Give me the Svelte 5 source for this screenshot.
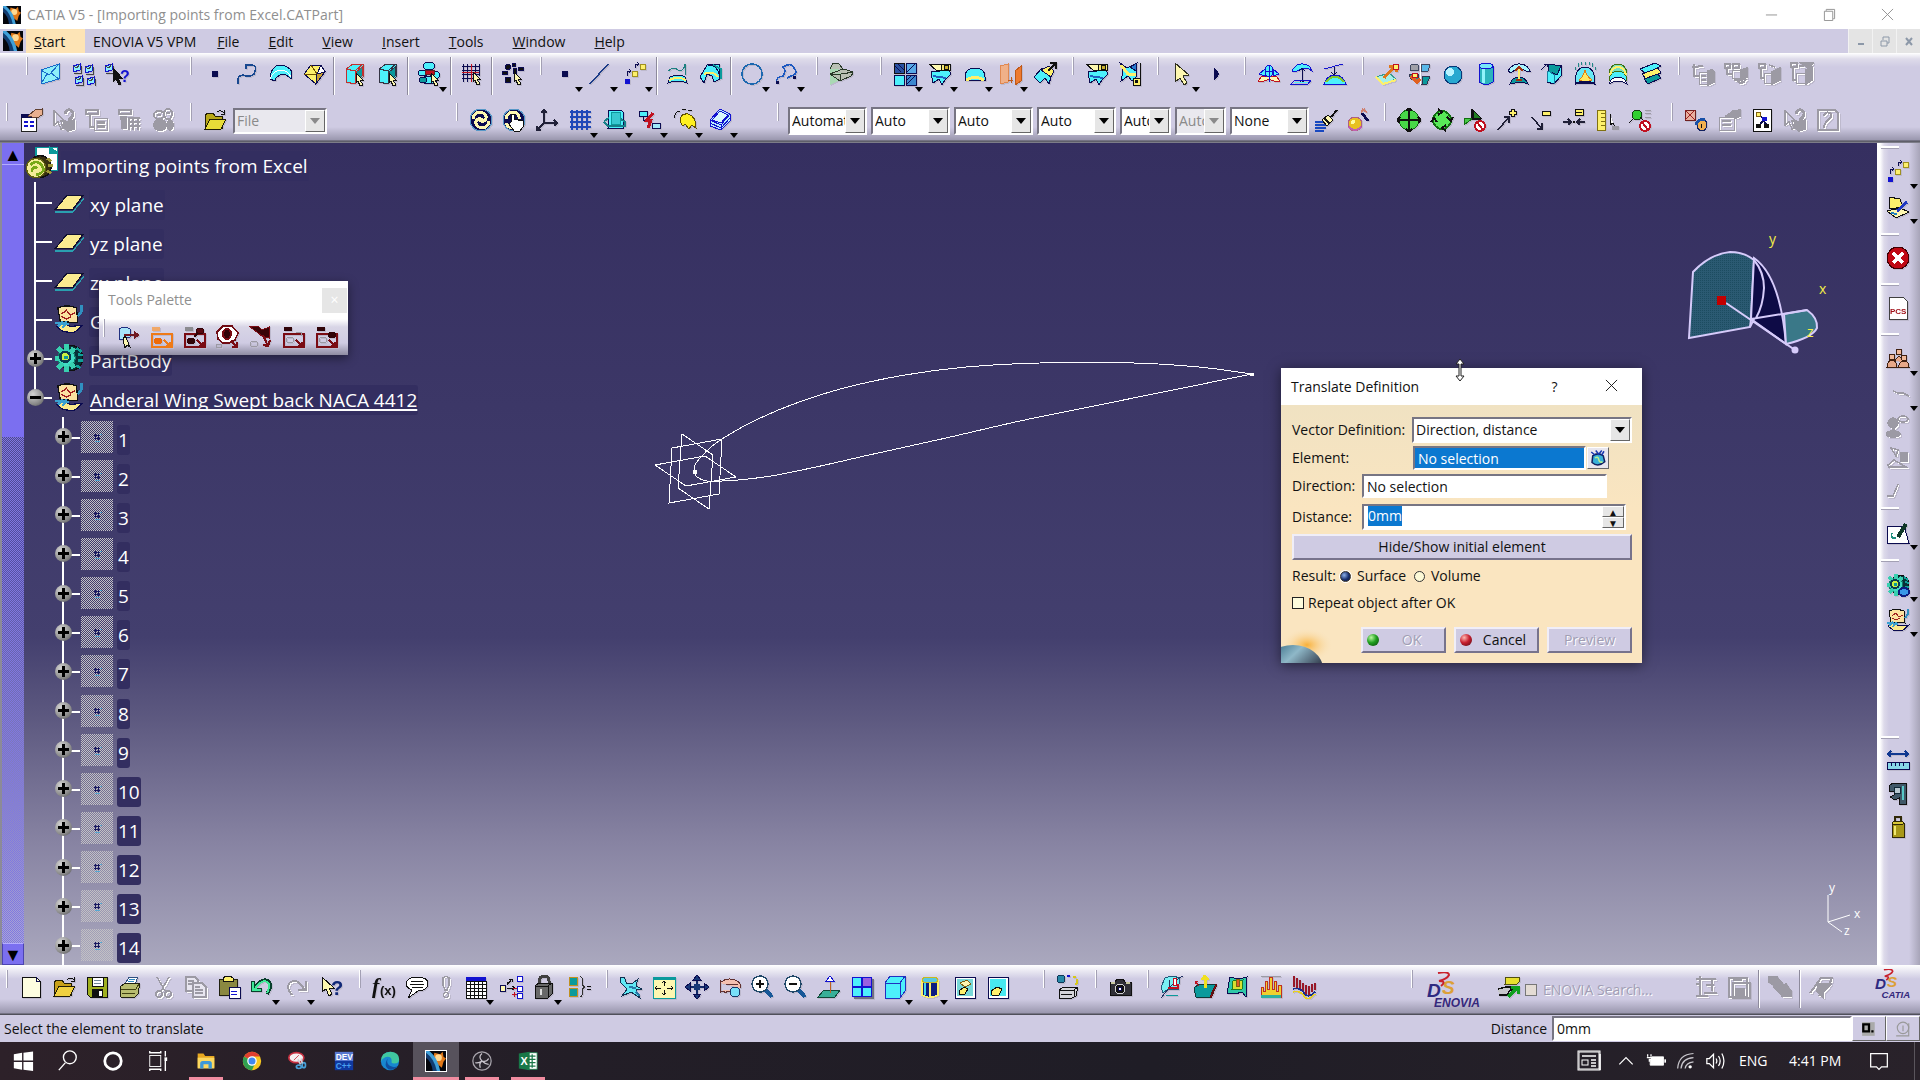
<script lang="ts">
  type Group = { gap: number; tools: string }
  type Tool = { icon: string; drop: boolean; off: boolean }
  type Row = { label: string; icon: string; node?: string; active?: boolean }

  const CY = '#4df0fb'
  const TE = '#0b9a9c'
  const NV = '#0b0b50'
  const BL = '#1212d0'
  const YE = '#fdf06c'
  const CR = '#fdf7b0'
  const RD = '#c01020'
  const GY = '#9c9aa4'
  const BK = '#101010'

  const p = (d: string, fill = 'none', stroke = NV, w = 1) =>
    `<path d="${d}" fill="${fill}" stroke="${stroke}" stroke-width="${w}"/>`
  const r = (x: number, y: number, w: number, h: number, fill = 'none', stroke = 'none') =>
    `<rect x="${x}" y="${y}" width="${w}" height="${h}" fill="${fill}" stroke="${stroke}"/>`
  const e = (x: number, y: number, rx: number, ry: number, fill = 'none', stroke = NV, w = 1) =>
    `<ellipse cx="${x}" cy="${y}" rx="${rx}" ry="${ry}" fill="${fill}" stroke="${stroke}" stroke-width="${w}"/>`
  const t = (x: number, y: number, size: number, s: string, fill = NV, extra = '') =>
    `<text x="${x}" y="${y}" font-size="${size}" font-family="Liberation Sans, sans-serif" font-weight="bold" fill="${fill}" ${extra}>${s}</text>`
  // greyed icons carry a white copy one pixel down and right
  const ghost = (s: string) =>
    `<g transform="translate(1 1)">${s.replaceAll(GY, '#ffffff')}</g>${s.replaceAll('stroke-width="1"', 'stroke-width="1.5"')}`
  const hand = (x: number, y: number) =>
    p(`M${x} ${y}l7 7h-3l3 5-3 1-2-5-2 2z`, CR, BK)
  const mini = (x: number, y: number) =>
    p(`M${x} ${y + 2}l7-2v6l-7 2z`, '#8ceefa', BL) + p(`M${x} ${y + 2}l4 2 3-4M${x + 1} ${y + 9}h7v-7`, 'none', '#444')
  const cube = (edge: string) =>
    p('M3 7L10 2L20 2V15L12 22L3 20Z', CY, edge) + p('M3 7L12 9L20 2M12 9V22', 'none', edge) + p('M13 10L19 5V14L13 20Z', TE, edge) + hand(13, 11)
  const stopSign = e(17, 18, 5, 5, '#fff', RD, 2) + p('M14 14L20 22', 'none', RD, 2)
  const geoset =
    p('M3 3Q10 0 18 3L19 15L5 14Z', '#fbe3a0', BK) + p('M6 8l4-3 3 4 4-2M6 10l4 2 4-2', 'none', '#a02020') +
    p('M22 1v5l-3 4', 'none', '#3090c0', 2) + p('M2 18l6-3 5 3 10-1-7 6-9-1z', '#fbe98a') + p('M1 15l11 1M3 18l4-4M7 19l3-5', 'none', '#3aa0d0', 2)
  const gear =
    e(14, 12, 9, 10, '#083038', BK) + p('M18 4l4 3M19 9l4 1M19 14h4M18 18l3 2', 'none', '#10a098', 2) +
    e(10, 12, 7, 7, '#40dcc4', '#107868', 1) + p('M10 1v5M10 18v5M1 12h4M3 4l4 4M3 20l4-4M16 4l-3 4M16 20l-3-4', 'none', '#38d0b0', 4) +
    e(9, 11, 4, 4, '#c8f040', '#0a3a50', 2) + r(8, 10, 3, 3, TE)
  const ds = t(0, 25, 19, 'D', '#2e2a80', 'font-style="italic"') + t(15, 22, 19, 'S', '#dca038', 'font-style="italic"') +
    p('M11 1Q22 -1 22 3Q20 7 12 9Q20 9 14 14', 'none', '#c8202c', 2)
  const palette = (main: string, a: string, b: string) =>
    r(2, 8, 21, 14, 'none', main) + r(3, 9, 19, 12, 'none', main) + e(7, 4, 4, 2, a, a) + e(9, 16, 4, 3, b, b) + p('M15 15l6 6M17 21h4v-4', 'none', main, 2)
  const caticon =
    r(0, 0, 24, 24, '#04060c') + p('M10 2L17 4L20 1L21 7L24 9L21 13L19 20L14 16L9 8Z', '#e07818', 'none') +
    e(15, 8, 4, 4, '#ffd890', 'none') + p('M0 0H4Q14 8 17 24H0Z', '#3f9fd8', 'none') + p('M0 2Q10 9 13 24H0Z', '#123c70', 'none') + p('M0 8Q7 13 8 24H0Z', '#04060c', 'none')

  const icons: Record<string, string> = {
    mail: p('M2 8L20 2V17L2 22Z', '#8ceefa', '#1868c8') + p('M2 8L10 13L20 2M2 22L8 12M20 17L12 11', 'none', '#1868c8'),
    workbench: mini(1, 2) + mini(13, 3) + mini(3, 14) + mini(15, 15),
    whatsthis: mini(0, 2) + p('M8 6V20L11 17L14 23L16 22L13 16H17Z', BK, BK) + t(15, 20, 16, '?', BL),
    point: r(9, 9, 6, 6, NV),
    spline: p('M2 22Q1 13 7 13Q13 16 18 12Q22 3 16 3L10 3V7', 'none', '#184890', 1.5),
    arch: p('M1 17Q2 3 12 3Q20 4 23 10L22 17Q14 8 7 16L6 19Z', CY) + p('M1 17Q4 8 13 8Q19 9 22 15', 'none', '#fff'),
    box: p('M2 12L9 3L19 3L23 10L14 22Z', YE) + p('M14 22L15 12L23 10M15 12L2 12M15 12L9 3', 'none', '#705000') + p('M15 12L19 3L23 10Z', '#fff') + p('M14 22L15 12L23 10Z', '#c8a030'),
    cubered: cube('#c03030'),
    cube: cube('#333344'),
    blob: e(12, 4, 6, 4, CY) + e(6, 11, 5, 3, CY) + e(18, 13, 5, 4, CY) + e(12, 18, 8, 4, CY) + r(8, 8, 9, 4, RD, '#602020') + e(6, 18, 4, 3, TE) + hand(14, 11),
    gridred: p('M2 4H19M2 8H19M2 12H19M2 16H19M3 2V20M7 2V20M15 2V20M19 2V14', 'none', NV) + p('M11 2V20M2 10H19', 'none', RD) + hand(13, 10),
    scatter: e(7, 5, 2.5, 2.5, BK) + e(13, 3, 2, 2, BK) + e(4, 11, 3, 2, BK) + e(20, 7, 3, 2, BK) + e(7, 18, 3, 3, BK) + e(14, 9, 2, 3, BK) + hand(13, 10),
    line: p('M2 22L20 2', 'none', '#1c3c88', 1.5),
    points: r(2, 17, 5, 5, BL) + r(9, 9, 5, 5, YE, '#a09020') + r(17, 2, 5, 5, YE, '#a09020') + p('M4 14V9H8M6 7l2 2-2 2M12 6V2H16M14 0l2 2-2 2'),
    project: p('M2 9Q8 4 12 8Q18 10 19 2V13', 'none', '#1c8080') + p('M4 15Q12 11 19 15L21 21Q12 17 2 21Z', CY, NV) + p('M3 18Q12 14 20 18', 'none', YE, 2),
    blend: p('M8 3L20 2L21 17L15 20L13 14L8 12L5 21L1 15Z', CY) + p('M5 12Q14 8 19 15', 'none', YE, 2) + p('M14 3L22 7V17', 'none', TE, 2) + p('M9 3Q18 3 20 12', 'none', NV),
    circle: e(12, 12, 10, 10, 'none', '#1c68b0', 1.5),
    curve: p('M2 21Q0 15 8 14Q12 8 8 5Q16 0 19 6Q24 12 16 14L12 16', 'none', '#1c58c0', 1.5) + r(1, 19, 3, 3, NV) + r(18, 14, 3, 3, NV),
    fold: p('M1 4V23L22 12Z', '#a9d8b4', 'none') + p('M1 7L4 1L10 2L14 7L25 10L22 14L11 19L1 12L14 7M1 12H12L25 10M11 19L12 12', '#b9c0b4', '#283828'),
    tiles: r(1, 1, 10, 10, '#2850a0', BK) + r(13, 1, 10, 10, '#58a8e8', NV) + r(1, 13, 10, 10, CY, NV) + r(13, 13, 10, 10, '#3c88d0', NV) +
      p('M2 4l6 6M5 2l6 6M14 10l8-8M14 22l8-8M14 18l5-5', 'none', NV),
    trim: p('M3 10L21 8L23 12L17 18L14 23L11 17L5 21Z', CY) + p('M5 14L18 16', 'none', '#2060c0', 2) + p('M1 2H13V8H8Z', CR, BK) + p('M13 2H22V8H13Z', '#f4e878', BK) + r(16, 3, 4, 4, '#c8b030', BK),
    trim2: p('M2 1L9 6L19 1L18 15L14 19L10 14L3 19L5 9Z', CY) + p('M3 3L10 12L18 13', 'none', YE, 3) + p('M12 5L19 1L18 9Z', '#2878d0') + p('M22 1V16', 'none', BK) + r(15, 16, 7, 7, YE, BK) + r(17, 18, 3, 3, BK),
    arch2: p('M2 15Q2 6 12 6Q22 6 22 15V18H2Z', CY) + p('M3 18Q12 13 21 18', 'none', YE, 3),
    mirror: p('M2 4L10 2V20L2 22Z', '#f0b088', '#e08850') + p('M17 9L23 4V19L17 23Z', '#ee7a30', '#c05818') + p('M10 18H15M13 15V21', 'none', '#c05818'),
    extract: p('M1 15L9 6L20 8L16 22L12 16L7 21Z', CY) + p('M8 8L16 4L21 9L18 15Z', YE) + p('M15 9L22 2M17 1H23V7', 'none', BK, 2),
    pointer: p('M5 1V20L10 16L14 23L17 21L13 14L19 13Z', CR, '#303020'),
    play: p('M9 6L14 12L9 18Z', NV),
    unite: p('M1 19L5 14H19L23 19L19 20L12 17L5 20Z', CR, RD) + p('M2 12L8 7V14ZM22 12L16 7V14Z', CY, BL) + e(12, 9, 4, 6, CY, BL) + p('M12 3V20M8 9h8', 'none', BL),
    lift: p('M2 9Q6 1 13 2Q20 2 22 9L19 7Q12 5 5 10Z', CY, BL) + p('M12 6V21M9 9l3-3 3 3M9 18l3 3 3-3') + p('M5 18H21L18 22H1Z', 'none', BL) + p('M4 20H18', 'none', CY),
    drop2: p('M1 22Q4 13 12 13Q20 13 23 22H1Z', CY, BL) + p('M1 7L20 2', 'none', BL) + p('M11 5V13M8 10l3 3 3-3') + p('M3 20Q12 9 21 20', 'none', '#80c830', 2),
    extrude: p('M1 15L14 11L21 17L8 22Z', '#a4f0e8', '#3a9a90') + p('M1 15Q7 21 8 22L21 18', 'none', YE, 2) + p('M9 16L19 5M14 4H21V10', 'none', '#e07818', 3) + r(18, 2, 5, 5, YE, RD),
    revolve: p('M2 4Q4 1 10 3V8H2Z', '#a0a0a8', '#404860') + p('M14 2L22 3L20 9H13Z', '#58b8e8', '#404860') + p('M1 12h9v5H3zM15 14h7l-3 8h-5z', TE, '#303850') + p('M12 1V23', 'none', '#fff') + p('M3 14L9 20L12 17', 'none', '#e06020', 3) + r(4, 11, 5, 4, YE, RD),
    sphere: e(12, 13, 9, 9, '#28a8d0', '#083878') + e(9, 10, 4, 4, '#b8f4ff', 'none'),
    cylinder: p('M5 4V20Q12 25 19 20V4', '#2cb4bc', BL) + r(8, 7, 3, 14, '#90f4fa') + e(12, 4, 7, 3, '#78e8f8', BL),
    offset: p('M1 9Q6 1 13 2Q20 2 23 9L19 9Q12 4 4 11Z', '#a8f4fc') + p('M3 22Q5 15 12 15Q18 15 21 22L15 20L8 21Z', TE) + p('M12 6V18M8 9L12 5L16 9M9 18h6', 'none', '#a03010', 2) + r(11, 7, 2, 10, YE),
    sweep: p('M8 9L21 4V14L14 22L7 20Z', CY) + p('M9 2L21 4L17 13L8 9Z', TE) + p('M1 8L7 2M4 2H7V5') + p('M7 20L8 9L15 13L14 22', 'none', '#1880a0'),
    fill: p('M2 22Q2 5 12 5Q22 5 22 22L18 21H6Z', '#68e8f4', NV) + p('M6 18Q10 15 12 8Q14 15 19 18Q12 21 6 18Z', '#ffe860', '#e08010') + p('M2 22Q12 17 22 22', 'none', NV, 2) + p('M2 5v3M5 1v4M8 0v3M12 0v3M16 0v3M19 1v4M22 5v3', 'none', '#208888'),
    loft: p('M3 12Q4 2 12 2Q20 2 21 12L19 13Q12 5 5 13Z', '#78e0c0', '#407010') + p('M3 18Q4 9 12 9Q20 9 21 18L19 19Q12 12 5 19Z', CY, '#407010') + p('M4 13Q6 5 12 5Q18 5 20 13', 'none', YE, 2) + p('M3 22Q5 15 12 15Q19 15 21 22Q12 16 3 22', '#fff'),
    stack: p('M1 7L16 1L22 4L7 12Z', CY) + p('M3 12L19 6L22 11L7 17Z', YE) + p('M5 17L19 12L22 16L9 22Z', TE),
    g1: ghost(r(8, 10, 9, 12, 'none', GY) + p('M3 2v6M1 5h6M3 8v6h5M7 4h5', 'none', GY) + p('M17 9Q23 6 23 10V20L17 23Z', GY, GY) + p('M10 14h5M10 18h5', 'none', GY)),
    g2: ghost(r(8, 8, 8, 8, 'none', GY) + p('M1 2h5v4H1zM9 2h6v4H9zM3 7v5h5M10 18h8v4', 'none', GY) + p('M17 8L23 6V15L17 18Z', GY, GY) + p('M14 19Q18 24 22 17', 'none', GY, 2)),
    g3: ghost(r(7, 11, 8, 10, 'none', GY) + p('M2 2h6v4H2zM4 7v9h3M12 3l6 2', 'none', GY) + p('M15 10L23 6V18L15 22Z', GY, GY)),
    g4: ghost(r(6, 11, 10, 10, 'none', GY) + p('M1 1h6v4H1zM3 6v12h3M9 4h5', 'none', GY) + p('M16 8L22 5V18L16 22Z', GY, GY) + p('M11 1h12l-5 5z', GY, GY)),

    props: r(2, 6, 15, 17, '#fff', '#222') + r(2, 6, 15, 4, NV) + p('M5 14h4M11 14h4M5 18h4M11 18h4', 'none', BL, 2) + p('M9 8L16 2L23 1V7L18 10L13 9Z', '#e8b090', '#604030'),
    gwhat: ghost(p('M2 3V17L6 14L9 21L11 20L9 13H13Z', 'none', GY) + p('M13 6Q14 1 18 2Q23 4 20 9L17 12V14', 'none', GY, 3) + p('M12 15L22 12V21L16 23L12 20Z', GY, GY)),
    gtree: ghost(p('M1 2h12v4H1zM5 7v12h4', 'none', GY, 2) + r(9, 10, 13, 12, 'none', GY) + p('M12 14h8M12 18h8', 'none', GY, 3)),
    gtable: ghost(p('M1 2h12v4H1z', 'none', GY, 2) + p('M3 9h5v11H4z', GY, GY) + p('M10 10h12M10 14h12M10 18h12M11 9v13M15 9v13M20 9v13', 'none', GY)),
    gmask: ghost(e(8, 7, 5, 4, 'none', GY, 2) + e(17, 6, 4, 5, 'none', GY, 2) + e(9, 17, 6, 5, GY, GY, 2) + e(19, 17, 3, 5, GY, GY) + p('M6 7h4M15 5h4', 'none', GY, 2)),
    folder: p('M2 7L5 5H10L12 8H19V20H2Z', '#b8a818', '#201c04') + p('M2 21L7 11H23L18 21Z', '#e8dc38', '#201c04') + p('M14 4Q18 1 21 5M21 2v4h-3', 'none', BK),
    swirl: e(12, 12, 11, 11, NV, '#5898c8') + p('M4 11Q5 4 12 4Q18 6 17 11Q14 15 10 12M20 13Q19 20 12 20Q6 18 7 13Q10 9 14 12', 'none', CR, 3),
    swirlhand: e(12, 12, 11, 11, NV, '#5898c8') + p('M4 11Q5 4 12 4Q18 6 17 11M4 15Q6 20 11 20', 'none', CR, 3) + p('M9 14V6H12V11L21 13V19L18 23H12L7 16Z', '#fff', BK),
    axis: p('M9 2V15H22M9 15L2 22M6 5L9 2L12 5M19 12L22 15L19 18M2 18V22H6', 'none', '#202038', 1.5),
    grid: p('M2 4H23M2 9H23M2 14H23M2 19H23M4 2V22M9 2V22M14 2V22M19 2V22', 'none', '#2048b8', 1.5),
    plate: p('M6 2H18L20 4V20H5Z', CY) + p('M1 13L6 10M1 14L5 18H22V14L18 11', 'none', '#188088', 2) + r(8, 4, 9, 12, '#38c8d0', TE),
    flash: r(1, 3, 8, 5, CY, NV) + p('M5 8V12h4') + p('M15 5L9 12H13L10 20', 'none', RD, 3) + r(14, 15, 8, 5, '#a0e8f8', NV),
    sun: p('M7 12Q8 5 15 6Q23 8 23 20L19 17L16 21L12 16Q9 20 7 12Z', '#fff020', '#605000') + p('M2 10Q1 4 7 3M9 1h4M15 2l4 1', 'none', BK),
    slab: p('M2 12L12 1L22 6V13L13 22L2 18Z', '#b8f0fc', BL) + p('M2 12L13 17L22 6M13 17V22M2 15l11 5 9-10', 'none', BL) + p('M4 12L12 3L20 7L13 15Z', '#d8f6fc', BL),
    brush: p('M1 14H12M1 17H14M1 20H12M1 23H10', 'none', '#1848c0', 2) + p('M8 12L14 7L19 12L13 18Z', CR, BK) + p('M10 10l6 6M17 9L23 2', 'none', BK, 2),
    paint: e(8, 16, 7, 7, '#e8c020', '#b06080') + e(6, 14, 2, 2, '#fffba0', 'none') + p('M2 19Q8 25 14 19', 'none', '#c060b0', 2) + p('M15 5L21 13', 'none', NV, 3) + p('M15 1l5 3M14 4l4-3', 'none', '#d08070', 2),
    pan: e(12, 12, 10, 10, '#48d848', '#107010') + p('M12 0V24M0 12H24M9 3l3-3 3 3M9 21l3 3 3-3M3 9L0 12l3 3M21 9l3 3-3 3', 'none', BK, 1.5),
    rotate: e(12, 12, 9, 9, '#58e858', '#107010', 2) + p('M8 1L12 4L8 7M16 17L12 20L16 23M1 14L4 10L7 14M17 9L21 13L23 9', 'none', BK, 2),
    axisstop: p('M9 1V11H18', 'none', BK, 2) + p('M9 11L1 17V10Z', '#48c848', '#107010') + p('M10 2L18 10H10Z', '#208020', BK) + stopSign,
    plus: p('M2 22L13 9M13 15V9H8', 'none', '#202038', 1.5) + p('M17 1V9M13 5H21', 'none', BK, 4) + p('M17 2V8M14 5H20', 'none', YE, 2),
    minus: p('M3 9L13 21M13 15V21H8', 'none', '#202038', 1.5) + r(13, 3, 8, 4, YE, BK),
    equal: p('M1 14H9M6 11l3 3-3 3M23 14H15M18 11l-3 3 3 3', 'none', '#202038', 1.5) + r(11, 13, 2, 2, BK) + r(13, 1, 8, 6, YE, BK) + p('M14 4H20', 'none', BK),
    ruler: r(2, 2, 8, 20, YE, '#807010') + p('M6 5h4M6 9h4M6 13h4M6 17h4', 'none', '#807010') + p('M15 6V17L18 15L20 19', '#fff', BK) + r(17, 18, 7, 4, GY),
    magnify: e(9, 7, 5, 5, '#30d030', '#104010') + p('M5 11L1 15M12 9L16 13', 'none', BK) + p('M17 2h6M17 5h6M17 9h6', 'none', GY) + stopSign,
    lady: p('M1 2H11V12H1Z', '#e8b0a0', '#702020') + p('M1 2L11 12M11 2L1 12', 'none', '#a02020') + e(18, 17, 5, 6, '#f0b050', '#102060') + p('M12 17Q14 10 21 12', 'none', '#1850a8', 3) + p('M17 16v4', 'none', BK),
    gprops: ghost(r(2, 9, 15, 13, 'none', GY) + p('M5 13h9M5 17h9', 'none', GY, 2) + p('M9 8L16 3L23 2V8L19 10Z', GY, GY)),
    nettree: r(3, 1, 18, 22, '#fff', BK) + p('M9 7L14 11L9 18M14 13L17 18', 'none', NV, 2) + r(6, 4, 4, 4, YE, '#806010') + r(12, 9, 5, 4, BL) + r(6, 16, 5, 4, BK) + r(14, 16, 5, 4, BK),
    gpage: ghost(p('M2 2H19L22 5V22H2Z', 'none', GY, 2) + p('M8 8Q9 3 14 5Q18 8 12 12Q8 16 8 20', 'none', GY, 2)),

    newdoc: p('M3 2H17L21 6V22H3Z', '#fdfde0', BK) + p('M17 2V6H21'),
    open: p('M2 7L5 5H10L12 8H19V20H2Z', '#c8a018', '#201c04') + p('M2 21L7 11H23L18 21Z', '#f0d040', '#201c04') + p('M15 5Q18 1 22 5M22 2v4h-3', 'none', BK),
    save: p('M2 2H22V22H5L2 19Z', '#a0b020', BK) + r(7, 2, 11, 9, '#fff', BK) + p('M9 5h7M9 8h7', 'none', '#708898') + r(7, 14, 11, 8, BK) + r(14, 16, 3, 5, '#fff'),
    print: p('M7 9L11 2H20L17 9Z', '#fff', '#305080') + p('M2 12L7 8H22L20 19L17 22H3Z', '#b8bc70', '#202010') + p('M3 14H18L21 9M4 18h13', 'none', '#404010') + p('M11 4h6M10 6h6', 'none', '#3088c0'),
    cut: ghost(p('M6 2L14 16M18 2L10 16', 'none', GY, 1.5) + e(8, 19, 3, 3, 'none', GY, 2) + e(17, 19, 3, 3, 'none', GY, 2)),
    copy: ghost(p('M2 2H11L14 5V16H2Z', '#e8e6f0', GY) + p('M9 8H18L22 12V22H9Z', '#e8e6f0', GY) + p('M11 12h5M11 15h8M11 18h8M4 6h6M4 9h4', 'none', GY)),
    paste: p('M2 4H20V20H2Z', '#8a8840', '#202010') + p('M6 3L9 1H13L16 3V6H6Z', YE, BK) + r(12, 12, 11, 11, '#fff', NV) + p('M14 16h6M14 19h6', 'none', BL),
    undo: p('M3 6V15H12M5 13Q9 6 15 5Q21 6 20 13L17 19', 'none', '#08402c', 3.5) + p('M3 7V15H11M5 14Q9 7 15 6Q20 7 19 13L17 18', 'none', '#3fe898', 2),
    redo: ghost(p('M21 6V15H13M19 14Q14 5 8 6Q1 8 4 16L7 20', 'none', GY, 2)),
    helpq: p('M2 2V17L6 14L9 21L12 19L9 13H14Z', CR, BK) + t(11, 20, 20, '?', '#102878'),
    fx: `<text x="0" y="18" font-size="22" font-family="Liberation Serif, serif" font-style="italic" font-weight="bold" fill="#101010">f</text>` +
      `<text x="8" y="20" font-size="13" font-family="Liberation Sans, sans-serif" font-weight="bold" fill="#101010">(x)</text>`,
    talk: p('M12 2Q23 2 23 9Q22 16 13 16L3 23L7 15Q1 13 1 8Q3 2 12 2Z', '#fff', BK) + p('M6 6h12M5 9h14M7 12h11', 'none', BK),
    excl: ghost(p('M9 3Q12 0 15 3V10L13 15H11L9 10Z', 'none', GY) + e(12, 20, 2.5, 2.5, 'none', GY)),
    calc: r(2, 2, 20, 4, BL) + r(2, 6, 20, 17, '#fff', BK) + p('M2 9H22M2 13H22M2 16H22M2 20H22M6 6V23M10 6V23M14 6V23M18 6V23', 'none', BK),
    spread: r(1, 10, 5, 6, CR, NV) + p('M8 13H16M13 11l3 2-3 2M8 10L13 4M10 4h3v3M8 10v-3', 'none', BK) + p('M13 19h5M15 17v5M14 13h4', 'none', RD) + r(18, 1, 5, 5, '#fff', BL) + r(18, 11, 5, 5, '#fff', BL) + r(18, 18, 5, 5, '#fff', BL),
    lock: p('M7 10V5Q8 1 13 1Q17 2 17 6V10', 'none', '#404040', 3) + p('M3 11L7 8H20V19L16 23H3Z', '#686868', BK) + p('M3 11H16L20 8M16 11V23', 'none', BK) + p('M9 14v6', 'none', '#ddd', 2),
    rules: r(2, 2, 8, 8, TE, '#c09020') + r(2, 13, 8, 8, TE, '#c09020') + p('M13 1Q17 3 15 10L18 12L15 14Q17 21 13 22', 'none', '#303030') + p('M20 11h4M20 14h4', 'none', BK),
    fly: p('M1 3L5 2L8 9L14 8L19 4L17 11L23 14L17 15L21 23L12 17L3 21L8 14L1 7Z', '#60e8f4', '#103050') + p('M17 17l4 4M10 12l7 1', 'none', '#2878a8', 2),
    fit: r(1, 2, 22, 21, CR, TE) + r(1, 2, 22, 3, TE) + p('M12 6V11M12 20V15M3 13H9M21 13H15M10 8l2-2 2 2M10 18l2 2 2-2M5 11l-2 2 2 2M19 11l2 2-2 2', 'none', BK),
    move: p('M12 3V21M3 12H21', 'none', '#102868', 2) + p('M8 5L12 0L16 5ZM8 19L12 24L16 19ZM5 8L0 12L5 16ZM19 8L24 12L19 16Z', '#183878') + r(9, 9, 6, 6, '#183878'),
    orbit: p('M2 5V18M2 8Q10 1 19 6Q24 9 22 13M2 16Q10 19 15 14M8 9H20', '#f4c0b0', '#603030') + e(17, 17, 5, 5, '#78e0f8', '#183868'),
    zoomin: p('M13 13L21 22', 'none', '#185898', 4) + e(9, 9, 8, 8, '#fff', '#204868', 1.5) + p('M9 5V13M5 9H13', 'none', BK, 2),
    zoomout: p('M13 13L21 22', 'none', '#185898', 4) + e(9, 9, 8, 8, '#fff', '#204868', 1.5) + p('M5 9H13', 'none', BK, 2),
    normal: p('M1 22L7 15H23L18 22Z', '#38b098', '#104838') + p('M13 18V5', 'none', '#c06020') + p('M9 6L13 1L17 6Z', '#fff', BL),
    multi: r(4, 4, 20, 20, '#707080') + r(2, 2, 9, 9, CY, BL) + r(12, 2, 9, 9, '#9a60e0', BL) + r(2, 12, 9, 9, CY, BL) + r(12, 12, 9, 9, CY, BL),
    cubeview: p('M2 8L7 1H22V16L17 23H2Z', CY, '#2030c0') + p('M2 8H17L22 1M17 8V23', 'none', '#2030c0'),
    barrel: p('M4 5V20Q12 25 20 20V5', '#0c1c80', BK) + p('M7 6V20', 'none', '#48d8e8', 2) + p('M4 5V20Q12 25 20 20V5M12 8V22', 'none', YE, 1.5) + e(12, 5, 8, 3, '#58c8e0', '#c8b820'),
    hide: r(2, 2, 20, 21, '#fff', NV) + r(4, 4, 16, 17, '#78d8d8') + p('M7 8L14 5L18 9L12 12Z', CR, '#806010') + p('M6 16L11 12L15 14L12 19L6 19Z', YE, BK),
    swap: r(2, 2, 20, 21, '#fff', NV) + r(4, 4, 16, 17, '#48e8f0') + p('M5 16L11 12L16 14L13 20L6 20Z', YE, BK),
    turn: e(5, 4, 4, 4, '#2888a8', '#103858') + p('M11 1h3', 'none', BL, 2) + p('M17 2h3M21 4v4l-2 2', 'none', '#d8c818', 2) + p('M3 15L8 12H22L20 21L16 23H3Z', '#d4d4d8', BK) + p('M3 15H18L22 12M18 15V22M5 19h11', 'none', BK),
    camera: p('M2 7H7L9 4H15L17 7H23V20H2Z', '#303038', BK) + e(12, 14, 5, 5, BK, '#d0d0d0') + e(12, 14, 2, 2, '#fff') + p('M3 8h4M18 8h4', 'none', '#c8c8a0', 2),
    a1: p('M5 3Q12 0 20 3L18 15L8 14L3 18L1 12Z', '#78f0f4', '#205878') + p('M1 23L9 13L19 3L23 1M9 5v9', 'none', '#203060') + e(15, 7, 2, 4, '#fff', RD) + p('M8 13h10v-4', 'none', RD, 2) + p('M6 20H18', 'none', TE),
    a2: p('M1 13L6 9H23L17 22H3Z', TE, '#103838') + p('M17 22L23 9L23 12L18 23Z', '#a01020', '#601010') + p('M12 13V3M9 5L12 1L15 5', 'none', '#f0e020', 3) + p('M6 11L2 6M2 9V6H5', 'none', RD),
    a3: p('M4 2Q12 5 21 2L20 22L16 17L9 19L1 18Z', '#30c8a8', NV) + p('M7 6L17 5L16 14L6 14Z', '#d8e030', '#208020') + e(12, 8, 2, 4, '#e06020', '#806010'),
    a4: p('M2 22V12H4V16H6V6H8V14H10V2H13V14H15V6H17V16H19V10H22V22Z', '#f0d030', '#c03020') + p('M2 21H22', 'none', '#30b0a0', 3) + p('M2 1H22', 'none', GY),
    a5: p('M2 1V12M5 3V13M8 5V14M11 8V17M14 10V19M17 11V20M20 9V17M23 8V15', 'none', '#981828', 1.5) + p('M1 14Q8 12 12 18T23 17', 'none', '#183090', 1.5) + p('M1 17Q8 15 12 21T23 19', 'none', '#e8d020', 1.5),
    search: p('M9 2H22V7L20 9H8Z', '#e8e030', '#505010') + p('M1 14L9 12H15L10 20H2M15 12V16', '#c8c8cc', BK, 1.5) + p('M11 22L20 13M14 12H21V19', 'none', '#10a020', 3),
    h1: ghost(p('M2 4h20M2 9h5M6 1v20M18 4v12M10 18h13M12 10h8M2 21h12', 'none', GY)),
    h2: ghost(p('M2 3H20V22H2Z', 'none', GY, 2) + p('M6 8H23V23H6Z', 'none', GY) + r(8, 13, 10, 9, GY) + p('M6 5h9', 'none', GY, 2)),
    h3: ghost(p('M1 2H9L14 8V12H8L1 7Z', GY, GY) + p('M6 12L18 9L23 16V21H14Z', GY, GY)),
    h4: ghost(p('M1 18L12 3H23L20 10L10 21', 'none', GY, 2) + p('M9 9H22L14 18V22L8 16Z', GY, GY)),

    sheet: p('M3 2L14 4L17 12L3 14Z', YE, BK) + p('M1 16L14 13L23 17L10 23Z', CR, BK) + p('M11 16L21 7', 'none', '#2038c0', 3) + p('M5 18l6 1', 'none', '#2080c0', 2),
    close: e(12, 12, 11, 11, '#c00814', '#400004') + p('M7 7L17 17M17 7L7 17', 'none', '#fff', 3),
    pcs: p('M3 1H17L21 5V23H3Z', '#fff', '#404040') + t(4, 18, 8, 'PCS', '#a01018'),
    people: e(6, 10, 3, 3, '#f0b898', '#402010') + e(13, 5, 3, 3, '#f0b898', '#402010') + e(18, 11, 3, 3, '#f0b898', '#402010') + p('M1 20Q2 13 6 13Q10 13 11 20ZM9 14Q13 5 17 15M12 20Q14 14 18 14Q23 14 23 20Z', '#e8a888', '#402010'),
    g5: ghost(p('M7 9L12 11H17L23 14', 'none', GY)),
    g6: ghost(e(7, 8, 5, 5, GY, GY) + e(17, 4, 5, 3, 'none', GY) + p('M7 12v5', 'none', GY, 3) + e(7, 19, 7, 3, GY, GY)),
    g7: ghost(p('M5 2L10 10L12 4ZM2 19L8 14L15 18L20 21H3Z', 'none', GY) + r(14, 6, 8, 10, GY)),
    g8: ghost(p('M1 19H7L12 7', 'none', GY)),
    sketch: p('M1 5H18L23 22H1Z', '#fff', NV) + p('M12 16L20 3', 'none', '#103828', 4) + p('M6 12Q4 18 10 17', 'none', '#209080', 1.5),
    body: gear + e(18, 19, 5, 4, '#3898e8', '#0c1c80', 2),
    geo: geoset,
    measure: p('M2 5H22M5 2L2 5l3 3M19 2l3 3-3 3', 'none', '#103890', 1.5) + r(1, 13, 22, 7, '#88d8e8', NV) + p('M5 13v4M9 13v4M13 13v4M17 13v4'),
    caliper: p('M3 4L7 1H20V22H13V16L9 18L4 15L8 13V9H3Z', '#405868', BK) + p('M8 5h6v6H9z', '#b8c8d0', '#102838') + p('M17 4v14', 'none', '#58c8c8', 2),
    weight: p('M6 8H18V22H6Z', '#a89818', '#302808') + e(12, 8, 6, 2, '#d8c838', '#302808') + p('M9 6V2H15V6', 'none', '#302808', 2) + r(8, 11, 2, 9, '#f0e870'),

    cat: caticon,
    part: p('M8 1H24V18H8Z', '#fff', TE) + p('M18 1L24 5H18Z', TE, TE) + e(11, 15, 8, 8, '#383010', BK) + p('M16 9l3 2M17 14h3M16 18l3 2', 'none', '#a09838', 2) +
      e(8, 16, 7, 7, '#f4ec98', '#606010') + p('M4 14Q8 9 12 14T8 21M5 19Q5 14 9 16', 'none', '#78a818', 2),
    plane: p('M1 18L10 7H23L15 18Z', '#fbeb90', '#101030') + p('M1 20H15L24 9', 'none', '#2aa0b0'),
    geoset,
    gear,
    hidden: p('M10 8v8M14 8v8M8 10h8M8 14h8', 'none', '#181860', 1.5) + p('M9 17h6M16 9h2', 'none', '#48a8d8'),

    t1: p('M3 4Q8 0 14 4V12L8 14H3Z', '#a8e4f8', '#203080') + p('M9 10L14 22L11 20L9 23L7 15Z', CR, BK) + p('M8 10H22M18 7l4 3-4 3', 'none', '#701820', 2),
    t2: palette('#ee7a18', '#f0a868', '#ee6a08'),
    t3: palette('#7a0c14', '#8c8c90', '#300408') + e(18, 6, 4, 3, '#580810', '#300408') + p('M12 12l4-4', 'none', '#300408', 2),
    t4: p('M2 7L8 1H17L23 8L20 15L14 18H8L3 14Z', '#fff', '#700c14', 1.5) + e(12, 9, 4, 5, '#300408', '#780c14', 2) + e(4, 21, 3, 2, 'none', GY) + p('M16 16l5 5M17 22h5v-5', 'none', '#7a0c14', 2),
    t5: p('M1 1H10L14 5L21 2V13L15 12L9 7Z', '#380408', '#7a0c14') + p('M15 10L20 21M22 15L20 21L15 20', 'none', '#7a0c14', 2) + e(6, 19, 4, 3, 'none', GY),
    t6: palette('#7a0c14', '#300408', 'none') + e(9, 15, 4, 3, 'none', GY) + p('M15 7h5v4', 'none', GY),
    t7: palette('#7a0c14', '#300408', 'none') + e(18, 10, 4, 3, '#300408', '#300408') + e(9, 15, 4, 3, 'none', GY),

    win: p('M2 4.5L11 3V11.5H2ZM12.5 3L23 1.5V11.5H12.5ZM2 13H11V21.5L2 20ZM12.5 13H23V23L12.5 21.5Z', '#fff', 'none'),
    find: e(14, 8, 7, 7, 'none', '#fff', 1.5) + p('M9 14L2 22', 'none', '#fff', 1.5),
    cortana: e(12, 12, 9, 9, 'none', '#fff', 3),
    tasks: r(3, 6, 12, 12, 'none', '#fff') + p('M3 1V3H15V1M3 23V21H15V23M20 1V7M20 12V23', 'none', '#fff', 1.5) + r(19, 8, 3, 4, '#fff'),
    explorer: p('M2 3H9L11 6H22V20H2Z', '#e8a820', 'none') + p('M2 8H22V21H2Z', '#fcd860', 'none') + p('M5 21V15Q5 12 8 12H16Q19 12 19 15V21H15V16H9V21Z', '#3c98d8', 'none'),
    chrome: e(12, 12, 11, 11, '#f8c820', 'none') + p('M12 12L2.5 6.5A11 11 0 0 1 21.5 6.5H12Z', '#e04030', 'none') + p('M12 12L2.5 6.5A11 11 0 0 0 12 23L16 14Z', '#30a050', 'none') + e(12, 12, 5, 5, '#4088f0', '#fff', 1.5),
    snip: e(10, 8, 9, 6, '#f4f0f0', '#c83040', 2) + p('M7 11L13 5', 'none', '#c83040') + e(13, 19, 3, 2, 'none', '#48a0d8', 2) + e(19, 17, 2, 3, 'none', '#48a0d8', 2) + p('M15 16L12 10M17 15L16 9', 'none', '#d0d0d8', 2),
    dev: r(1, 1, 22, 11, '#5878d0') + r(1, 12, 22, 11, '#1038a0') + t(2, 11, 10, 'DEV', '#fff') + t(2, 22, 10, 'C++', '#48a0f0'),
    edge: e(12, 12, 11, 11, '#1888d0', 'none') + p('M1 13Q1 1 13 1Q23 2 23 10Q23 15 17 15Q13 15 14 12Q14 7 9 7Q3 8 1 13Z', '#40c8a0', 'none') + p('M9 9Q7 17 15 19Q19 20 21 18Q17 24 10 22Q4 18 9 9Z', '#1050a0', 'none'),
    obs: e(12, 12, 11, 11, '#28242c', '#a8a4ac', 1.5) + p('M12 3Q7 7 12 12Q17 14 20 9M12 12Q8 15 10 20M12 12Q16 16 20 16M4 14Q8 15 12 12', 'none', '#c8c4cc', 1.5),
    excel: p('M11 2H23V22H11Z', '#fff', '#187848') + p('M13 6h8M13 10h8M13 14h8M13 18h8M17 4v16', 'none', '#187848', 1.5) + p('M1 3L14 1V23L1 21Z', '#187848', 'none') + t(3, 17, 13, 'X', '#fff'),
    news: r(1, 2, 22, 19, 'none', '#fff') + r(2, 3, 20, 17, 'none', '#fff') + p('M5 7H19M14 11H19M14 14H19M14 17H19M23 5V21', 'none', '#fff', 1.5) + r(5, 11, 6, 5, 'none', '#fff'),
    up: p('M4 16L12 8L20 16', 'none', '#fff', 1.5),
    battery: p('M7 7H21V17H5V11', '#fff', '#fff') + r(22, 10, 2, 4, '#fff') + p('M2 4V7M6 4V7M1 8H7V10H4V13', 'none', '#fff', 1.5),
    wifi: p('M2 21Q3 4 21 3M6 21Q7 9 21 8M11 21Q12 14 21 13', 'none', '#c8c6cc', 1.5) + e(17, 19, 2, 2, '#fff', 'none'),
    sound: p('M1 9H4L9 4V20L4 15H1Z', 'none', '#fff', 1.5) + p('M12 9Q14 12 12 15M15 6Q19 12 15 18M19 3Q24 12 19 21', 'none', '#fff', 1.5),
    notice: p('M2 3H22V19H15L12 22L9 19H2Z', 'none', '#fff', 1.5),
    formula: p('M5 9Q12 4 19 9L21 17Q12 25 4 18Z', '#38b0d8', '#102060', 2) + p('M3 4l5 4M9 2l4 5 4-5M20 3l-3 5', 'none', '#1838b0', 2) + p('M8 12q4-3 5 2t5 3', 'none', '#b8f090', 2),
  }

  const parse = (s: string): Tool[] =>
    s.split(' ').map((w) => ({
      icon: w.replace('+', ''),
      drop: w.endsWith('+'),
      off: /^(g\d|h\d|gwhat|gtree|gtable|gmask|gprops|gpage|cut|copy|redo|excl)/.test(w),
    }))

  const topRow: Group[] = [
    { gap: 25, tools: 'mail workbench whatsthis' },
    { gap: 56, tools: 'point spline arch box | cubered cube | blob+ | gridred | scatter' },
    { gap: 10, tools: 'point+ line+ points+ | project blend | circle+ curve+' },
    { gap: 10, tools: 'fold' },
    { gap: 22, tools: 'tiles+ trim+ arch2+ mirror+ extract' },
    { gap: 10, tools: 'trim trim2' },
    { gap: 10, tools: 'pointer+ play' },
    { gap: 10, tools: 'unite lift drop2' },
    { gap: 10, tools: 'extrude revolve sphere cylinder offset sweep fill loft stack' },
    { gap: 10, tools: 'g1 g2 g3 g4' },
  ]

  const bottomRow: Group[] = [
    { gap: 5, tools: 'newdoc open save print cut copy paste undo+ redo+ helpq' },
    { gap: 10, tools: 'fx talk excl calc+ spread lock+ rules' },
    { gap: 10, tools: 'fly fit move orbit zoomin zoomout normal multi cubeview+ barrel+ hide swap' },
    { gap: 28, tools: 'turn' },
    { gap: 10, tools: 'camera' },
    { gap: 10, tools: 'a1 a2 a3 a4 a5' },
  ]

  const sideColumn: Group[] = [
    { gap: 2, tools: 'points+ sheet+' },
    { gap: 8, tools: 'close' },
    { gap: 8, tools: 'pcs' },
    { gap: 8, tools: 'people+ g5+ g6 g7 g8' },
    { gap: 2, tools: 'sketch+' },
    { gap: 8, tools: 'body+ geo+' },
    { gap: 98, tools: 'measure caliper weight' },
  ]

  const graphic = [
    { label: 'Fill colour', value: 'Automatic', size: 'wide' },
    { label: 'Transparency', value: 'Auto', size: 'wide' },
    { label: 'Line weight', value: 'Auto', size: 'wide' },
    { label: 'Line type', value: 'Auto', size: 'wide' },
    { label: 'Point symbol', value: 'Auto', size: 'narrow' },
    { label: 'Rendering style', value: 'Auto', size: 'narrow', disabled: true },
    { label: 'Layer', value: 'None', size: 'wide' },
  ]

  const menus = ['File', 'Edit', 'View', 'Insert', 'Tools', 'Window', 'Help']

  const rows: Row[] = [
    { label: 'xy plane', icon: 'plane' },
    { label: 'yz plane', icon: 'plane' },
    { label: 'zx plane', icon: 'plane' },
    { label: 'Geometrical Set.1', icon: 'geoset' },
    { label: 'PartBody', icon: 'gear', node: '+' },
    { label: 'Anderal Wing Swept back NACA 4412', icon: 'geoset', node: '-', active: true },
  ]
  const sections = Array.from({ length: 14 }, (_, i) => i + 1)

  const pinned = ['explorer', 'chrome', 'snip', 'dev', 'edge', 'cat', 'obs', 'excel']
  const running = ['explorer', 'cat', 'obs', 'excel']

  // wing section, leading edge first
  const upper = [
    [695, 329], [695, 322], [701, 314], [711, 304], [722, 296], [750, 280], [791, 262], [844, 245], [905, 232],
    [966, 224], [1040, 220], [1134, 220], [1199, 224], [1252, 231],
  ]
  const lower = [
    [695, 329], [697, 334], [707, 338], [722, 338], [738, 337], [771, 333], [816, 324], [869, 312], [946, 295],
    [1020, 278], [1089, 264], [1252, 231],
  ]

  function smooth(pts: number[][]) {
    let d = `M${pts[0]}`
    for (let i = 0; i < pts.length - 1; i++) {
      const a = pts[i - 1] ?? pts[i]
      const b = pts[i]
      const c = pts[i + 1]
      const f = pts[i + 2] ?? c
      d += `C${b[0] + (c[0] - a[0]) / 6} ${b[1] + (c[1] - a[1]) / 6} ${c[0] - (f[0] - b[0]) / 6} ${c[1] - (f[1] - b[1]) / 6} ${c}`
    }
    return d
  }

  let distance = $state('0mm')
  let element = $state('No selection')
  let direction = $state('No selection')
  let result = $state('surface')
  let repeat = $state(false)

  function selectAll(node: HTMLInputElement) {
    node.focus()
    node.select()
  }
</script>

{#snippet glyph(name: string)}
  <svg class="glyph" viewBox="0 0 24 24" aria-hidden="true">{@html icons[name]}</svg>
{/snippet}

{#snippet tools(list: string)}
  {#each parse(list) as tool}
    {#if tool.icon === '|'}
      <span class="sep"></span>
    {:else}
      <button
        type="button"
        class="tool"
        class:drop={tool.drop}
        class:off={tool.off}
        class:slim={tool.icon === 'excl'}
        aria-label={tool.icon}
      >
        {@render glyph(tool.icon)}
      </button>
    {/if}
  {/each}
{/snippet}

{#snippet bar(groups: Group[])}
  {#each groups as g}
    <div class="group" style:margin-inline-start="{g.gap}px">
      <span class="grip"></span>
      {@render tools(g.tools)}
    </div>
  {/each}
{/snippet}

<div class="app">
  <header class="title">
    <span class="logo">{@render glyph('cat')}</span>
    <h1>CATIA V5 - [Importing points from Excel.CATPart]</h1>
    <div class="winctl">
      <button type="button" aria-label="Minimize"><svg viewBox="0 0 14 14"><path d="M1 7.5H13" /></svg></button>
      <button type="button" aria-label="Restore"><svg viewBox="0 0 14 14"><path d="M1.5 3.5H10.5V13.5H1.5ZM3.5 3V1.5H12.5V11.5H11" /></svg></button>
      <button type="button" aria-label="Close"><svg viewBox="0 0 14 14"><path d="M1 1L13 13M13 1L1 13" /></svg></button>
    </div>
  </header>

  <nav class="menu">
    <span class="logo big">{@render glyph('cat')}</span>
    <button type="button" class="start"><u>S</u>tart</button>
    <button type="button" class="vpm">ENOVIA V5 VPM</button>
    {#each menus as m}
      <button type="button"><u>{m[0]}</u>{m.slice(1)}</button>
    {/each}
    <div class="docctl">
      <button type="button" aria-label="Minimize document"><svg viewBox="0 0 12 12"><path d="M3 9H9" stroke-width="2" /></svg></button>
      <button type="button" aria-label="Restore document"><svg viewBox="0 0 12 12"><path d="M2 6H8V11H2ZM4 5V2H10V8H8" /></svg></button>
      <button type="button" aria-label="Close document"><svg viewBox="0 0 12 12"><path d="M3 3L9 10M9 3L3 10" stroke-width="2" /></svg></button>
    </div>
  </nav>

  <section class="bars" aria-label="Toolbars">
    <div class="line">{@render bar(topRow)}</div>
    <div class="line">
      {@render bar([
        { gap: 5, tools: 'props gwhat gtree gtable gmask' },
        { gap: 10, tools: 'folder' },
      ])}
      <div class="combo file disabled">
        <select aria-label="Open from" disabled><option>File</option></select><span class="arrow"></span>
      </div>
      {@render bar([{ gap: 128, tools: 'swirl swirlhand axis grid+ plate+ flash+ sun+ slab+' }])}
      <div class="group graphic">
        <span class="grip"></span>
        {#each graphic as g}
          <div class="combo {g.size}" class:disabled={g.disabled}>
            <select aria-label={g.label} disabled={g.disabled}><option>{g.value}</option></select><span class="arrow"></span>
          </div>
        {/each}
        <div class="group">{@render tools('brush paint')}</div>
      </div>
      {@render bar([
        { gap: 8, tools: 'pan rotate axisstop plus minus equal ruler magnify' },
        { gap: 14, tools: 'lady gprops nettree gwhat gpage' },
      ])}
    </div>
  </section>

  <main class="work">
    <div class="stage">
      <div class="scroll">
        <button type="button" aria-label="Scroll up">▲</button>
        <div class="track"><div class="thumb"></div></div>
        <button type="button" aria-label="Scroll down">▼</button>
      </div>

      <ul class="tree">
        <li class="root">
          <span class="rooticon">{@render glyph('part')}</span>
          <span class="label">Importing points from Excel</span>
        </li>
        {#each rows as row}
          <li class="l1" class:last={row.active}>
            {#if row.node}<button type="button" class="node" class:minus={row.node === '-'} aria-label="Toggle {row.label}"></button>{/if}
            <span class="pic">{@render glyph(row.icon)}</span>
            <span class="label" class:active={row.active}>{row.label}</span>
          </li>
        {/each}
        {#each sections as n}
          <li class="l2">
            <button type="button" class="node" aria-label="Expand {n}"></button>
            <span class="dither">{@render glyph('hidden')}</span>
            <span class="label">{n}</span>
          </li>
        {/each}
      </ul>

      <svg class="model" aria-label="Wing section">
        <g fill="none" stroke="#fff">
          <path d={smooth(upper)} />
          <path d={smooth(lower)} />
          <path d="M682 291L713 312L709 366L678 345ZM672 305L722 296L719 351L669 360ZM655 322L705 313L736 334L686 343Z" />
        </g>
        <path d="M693 327h4v4h-4zM1250 230h4v3h-4z" fill="#fff" />
      </svg>

      <svg class="compass" viewBox="0 0 220 170" aria-label="Compass">
        <defs>
          <pattern id="mesh" width="2" height="2" patternUnits="userSpaceOnUse">
            <rect width="2" height="2" fill="#2b5a72" /><rect width="1" height="1" fill="#1c4c60" />
          </pattern>
        </defs>
        <g stroke="#d6cbfa" stroke-width="2" fill="none">
          <path d="M53 62Q70 44 90 42Q104 42 114 50L111 109L110 117L49 128Z" fill="url(#mesh)" />
          <path d="M114 48Q140 66 146 134L111 109Z" fill="#0e0b46" />
          <path d="M144 104L167 100Q178 108 177 118Q172 128 146 134Z" fill="#3a7888" />
          <path d="M114 50Q124 62 124 78Q123 96 116 108M110 117L114 109M111 109L167 100M86 93L155 140" />
        </g>
        <circle cx="155" cy="140" r="3.5" fill="#d6cbfa" />
        <rect x="77" y="86" width="9" height="9" fill="#c40000" />
        <g fill="#f4ee48" font-size="14"><text x="129" y="34">y</text><text x="179" y="84">x</text><text x="167" y="127">z</text></g>
      </svg>

      <svg class="triad" viewBox="0 0 44 66" aria-label="Axis system">
        <path d="M8 20V47L30 40M8 47L22 57" fill="none" stroke="#fff" />
        <g fill="#fff" font-size="12"><text x="9" y="17">y</text><text x="34" y="43">x</text><text x="24" y="60">z</text></g>
      </svg>

      <section class="palette" aria-label="Tools Palette">
        <header><h2>Tools Palette</h2><button type="button" aria-label="Close palette">×</button></header>
        <div class="body">
          <span class="grip"></span>
          {@render tools('t1 t2 t3 t4 t5 t6 t7')}
        </div>
      </section>

      <form class="dialog" aria-label="Translate Definition" onsubmit={(ev) => ev.preventDefault()}>
        <header>
          <h2>Translate Definition</h2>
          <button type="button" aria-label="Help">?</button>
          <button type="button" aria-label="Close dialog"><svg viewBox="0 0 14 14"><path d="M1 1L13 13M13 1L1 13" /></svg></button>
        </header>
        <div class="fields">
          <div class="field">
            <label class="long" for="vector">Vector Definition:</label>
            <div class="combo vector">
              <select id="vector"><option>Direction, distance</option><option>Point to point</option><option>Coordinates</option></select><span class="arrow"></span>
            </div>
          </div>
          <div class="field">
            <label class="long" for="element">Element:</label>
            <input id="element" class="picked" bind:value={element} />
            <button type="button" class="multi" aria-label="Multiple elements">{@render glyph('formula')}</button>
          </div>
          <div class="field">
            <label for="direction">Direction:</label>
            <input id="direction" class="dir" bind:value={direction} />
          </div>
          <div class="field tall">
            <label for="distance">Distance:</label>
            <div class="spin">
              <input id="distance" bind:value={distance} use:selectAll />
              <div class="steps"><button type="button" aria-label="Increase">▲</button><button type="button" aria-label="Decrease">▼</button></div>
            </div>
          </div>
          <button type="button" class="push">Hide/Show initial element</button>
          <div class="choices" role="radiogroup" aria-labelledby="result-label">
            <span id="result-label">Result:</span>
            <label><input type="radio" name="result" value="surface" bind:group={result} />Surface</label>
            <label><input type="radio" name="result" value="volume" bind:group={result} />Volume</label>
          </div>
          <label class="repeat"><input type="checkbox" bind:checked={repeat} />Repeat object after OK</label>
          <div class="actions">
            <button type="submit" class="push" disabled><i class="ball green"></i><span>OK</span></button>
            <button type="button" class="push"><i class="ball red"></i><span>Cancel</span></button>
            <button type="button" class="push" disabled><span>Preview</span></button>
          </div>
        </div>
        <svg class="planet" viewBox="0 0 60 40" aria-hidden="true">
          <defs>
            <radialGradient id="glow"><stop offset="0" stop-color="#f8b038" /><stop offset="1" stop-color="#f9e4bf" stop-opacity="0" /></radialGradient>
            <linearGradient id="globe" x1="0.2" y1="0" x2="0.9" y2="0.6"><stop offset="0" stop-color="#3c7088" /><stop offset=".4" stop-color="#8fb8c8" /><stop offset="1" stop-color="#242838" /></linearGradient>
          </defs>
          <ellipse cx="26" cy="22" rx="26" ry="17" fill="url(#glow)" />
          <ellipse cx="12" cy="46" rx="30" ry="24" fill="url(#globe)" />
        </svg>
      </form>

      <svg class="cursor" viewBox="0 0 10 24" aria-hidden="true">
        <path d="M5 1L9 6H6V18H9L5 23L1 18H4V6H1Z" fill="#fff" stroke="#222" />
      </svg>
    </div>

    <aside class="side" aria-label="Workbench tools">
      {#each sideColumn as g}
        <div class="vgroup" style:margin-block-start="{g.gap}px">
          <span class="grip"></span>
          {@render tools(g.tools)}
        </div>
      {/each}
    </aside>
  </main>

  <section class="line lower" aria-label="Standard toolbars">
    {@render bar(bottomRow)}
    <div class="group enovia">
      <span class="grip"></span>
      <svg class="ds" viewBox="0 0 56 40" role="img" aria-label="ENOVIA">
        {@html ds}
        <text x="7" y="35" class="brand">ENOVIA</text>
      </svg>
      {@render tools('search')}
      <label class="find"><input type="checkbox" disabled />ENOVIA Search...</label>
      {@render tools('h1 h2 | h3 | h4')}
    </div>
    <svg class="ds catia" viewBox="0 0 56 40" role="img" aria-label="CATIA">
      {@html ds}
      <text x="8" y="36" class="brand">CATIA</text>
    </svg>
  </section>

  <footer class="status">
    <output>Select the element to translate</output>
    <label for="value">Distance</label>
    <input id="value" bind:value={distance} />
    <button type="button" aria-label="Power input"><svg viewBox="0 0 14 14"><path d="M1 1H12V13H1Z" fill="#aaa" stroke="none" /><path d="M2 3H7V9H2ZM9 9H11" stroke="#000" stroke-width="2" /></svg></button>
    <button type="button" aria-label="Information"><svg viewBox="0 0 14 14"><circle cx="7" cy="6" r="5" stroke="#999" /><path d="M7 4V9M1 13H12V2" stroke="#999" /></svg></button>
  </footer>

  <nav class="taskbar" aria-label="Taskbar">
    {#each ['win', 'find', 'cortana', 'tasks'] as name}
      <button type="button" class="sys" aria-label={name}>{@render glyph(name)}</button>
    {/each}
    <div class="apps">
      {#each pinned as name}
        <button type="button" class:running={running.includes(name)} class:current={name === 'cat'} aria-label={name}>{@render glyph(name)}</button>
      {/each}
    </div>
    <div class="tray">
      <button type="button" class="news" aria-label="News">{@render glyph('news')}</button>
      {#each ['up', 'battery', 'wifi', 'sound'] as name}
        <button type="button" aria-label={name}>{@render glyph(name)}</button>
      {/each}
      <span class="lang">ENG</span>
      <time>4:41 PM</time>
      <button type="button" class="notice" aria-label="Notifications">{@render glyph('notice')}</button>
    </div>
  </nav>
</div>

<style>
  :global(body) {
    margin: 0;
    background: #1f1d26;
  }

  .app {
    --panel: #cfcbe3;
    display: grid;
    grid-template-rows: 29px 24px 90px minmax(0, 1fr) 50px 27px 38px;
    height: 100vh;
    overflow: hidden;
    font: 14px/20px 'Open Sans', 'Noto Sans', sans-serif;
    color: #111;
  }

  button,
  input,
  select {
    font: inherit;
    color: inherit;
    margin: 0;
    padding: 0;
    border: 0;
    border-radius: 0;
    background: none;
    min-width: 0;
    box-sizing: border-box;
    outline: none;
  }

  h1,
  h2 {
    margin: 0;
    font-size: 14px;
    font-weight: 400;
  }

  .glyph {
    display: block;
    width: 24px;
    height: 24px;
    flex: none;
  }

  .title {
    display: flex;
    align-items: center;
    background: #fff;
    color: #8f8f8f;
  }

  .logo {
    display: flex;
    padding: 0 6px 0 3px;
  }

  .logo .glyph {
    width: 18px;
    height: 18px;
  }

  .logo.big {
    padding: 0 2px;
  }

  .logo.big .glyph {
    width: 22px;
    height: 20px;
  }

  .winctl,
  .docctl {
    display: flex;
    margin-left: auto;
  }

  .winctl {
    padding-right: 4px;
  }

  .winctl button {
    display: grid;
    place-items: center;
    width: 58px;
    height: 29px;
  }

  .winctl svg,
  .dialog header svg {
    width: 13px;
    height: 13px;
    fill: none;
    stroke: currentColor;
  }

  .menu {
    display: flex;
    align-items: stretch;
    background: var(--panel);
  }

  .menu > button {
    padding: 1px 15px 0 14px;
  }

  .menu .logo {
    align-items: center;
  }

  .menu .start {
    background: #fde4b6;
    padding: 1px 12px 0 8px;
    width: 59px;
    text-align: left;
  }

  .menu .vpm {
    padding: 1px 7px 0 8px;
  }

  .docctl button {
    display: grid;
    place-items: center;
    width: 24px;
    background: #e4e4e4;
    border-left: 1px solid #f2f2f2;
  }

  .docctl svg {
    width: 12px;
    height: 12px;
    fill: none;
    stroke: #8c98a8;
  }

  .bars {
    display: grid;
    grid-template-rows: 46px 41px;
    background: linear-gradient(#fff 0, #dedbea 6px, var(--panel) 14px, var(--panel) 74px, #9a97ae 87px, #50505a 88px, #8c8c98 90px);
  }

  .line {
    display: flex;
    align-items: flex-start;
    padding-top: 3px;
  }

  .group {
    display: flex;
    align-items: flex-start;
  }

  .grip {
    flex: none;
    width: 2px;
    height: 18px;
    margin: 1px 6px 0 1px;
    background: #fff;
    border-right: 1px solid #a3a0b4;
    box-sizing: border-box;
  }

  .sep {
    flex: none;
    width: 8px;
    height: 38px;
    margin-top: 1px;
    background: linear-gradient(90deg, transparent 3px, #8d8a9c 3px 4px, #fff 4px 5px, transparent 5px);
  }

  .tool {
    position: relative;
    flex: none;
    width: 33px;
    height: 36px;
    padding: 6px 5px;
    text-align: left;
  }

  .tool .glyph {
    filter: drop-shadow(1px 1px 0 #bdb9cd);
    shape-rendering: crispEdges;
  }

  .tool.drop {
    width: 35px;
  }

  .tool.slim {
    width: 26px;
    padding: 6px 1px;
  }

  .tool.drop::after {
    content: '';
    position: absolute;
    right: 0;
    bottom: 0;
    border: 4px solid transparent;
    border-top: 5px solid #000;
    border-bottom: 0;
  }

  .combo {
    display: flex;
    height: 26px;
    box-sizing: border-box;
    background: #fff;
    border: 2px solid #fff;
    border-top-color: #777583;
    border-left-color: #777583;
  }

  .combo select {
    appearance: none;
    flex: 1;
    padding-left: 2px;
    background: transparent;
    opacity: 1;
    overflow: hidden;
    text-overflow: clip;
  }

  .arrow {
    flex: none;
    display: grid;
    place-items: center;
    width: 20px;
    box-sizing: border-box;
    background: #e6e6e6;
    border: 1px solid #fff;
    border-right-color: #666;
    border-bottom-color: #666;
  }

  .arrow::after {
    content: '';
    border: 5px solid transparent;
    border-top: 6px solid #000;
    border-bottom: 0;
  }

  .combo.disabled {
    background: #e9e8ee;
    color: #8a8a8a;
  }

  .combo.disabled .arrow::after {
    border-top-color: #8a8a8a;
  }

  .combo.file {
    width: 94px;
    margin: 6px 0 0 2px;
  }

  .combo.wide {
    width: 79px;
  }

  .combo.narrow {
    width: 51px;
  }

  .graphic {
    margin-left: 38px;
    gap: 4px;
  }

  .graphic .grip {
    margin-right: 5px;
  }

  .graphic .combo {
    height: 28px;
    margin-top: 5px;
  }

  .graphic .group {
    margin-left: -4px;
  }

  .work {
    display: grid;
    grid-template-columns: minmax(0, 1fr) 43px;
    min-height: 0;
  }

  .stage {
    position: relative;
    display: flex;
    min-height: 0;
    overflow: hidden;
    background: linear-gradient(#352f60 0, #3c3767 32%, #433f6e 60%, #5d5980 70%, #8783a2 85%, #aaa8be 100%);
    color: #fff;
  }

  .scroll {
    display: flex;
    flex-direction: column;
    width: 24px;
    box-sizing: border-box;
    border-left: 2px solid #8c8a98;
    background: #6d66b4;
  }

  .scroll button {
    height: 22px;
    color: #000;
    background: #7b6ff0;
    border-bottom: 1px solid #b4acff;
    font-size: 18px;
    line-height: 20px;
  }

  .scroll button:last-child {
    border: 1px solid #4c44b0;
    border-top-color: #b4acff;
  }

  .track {
    flex: 1;
    background:
      repeating-conic-gradient(#8078e0 0 25%, transparent 0 50%) 0 0 / 2px 2px,
      linear-gradient(#423e6c, #524ca0 50%, #aaa6d8);
  }

  .thumb {
    height: 35%;
    background: #7b6ff0;
  }

  .tree {
    flex: none;
    display: grid;
    grid-template-rows: repeat(21, minmax(0, 1fr));
    margin: 0;
    padding: 0;
    list-style: none;
    font-size: 19px;
    line-height: 24px;
  }

  .tree li {
    position: relative;
    display: flex;
    align-items: center;
  }

  .tree .glyph {
    shape-rendering: crispEdges;
  }

  .root {
    padding-left: 1px;
  }

  .rooticon .glyph {
    width: 33px;
    height: 33px;
  }

  .tree .label {
    margin-top: 6px;
    padding: 3px 1px;
    border-radius: 3px;
    background: #332e60;
    white-space: nowrap;
  }

  .root .label {
    margin-left: 3px;
  }

  .tree .active {
    text-decoration: underline;
    text-decoration-thickness: 2px;
    text-underline-offset: 2px;
    text-decoration-skip-ink: none;
  }

  .l1 {
    padding-left: 30px;
  }

  .l2 {
    padding-left: 57px;
  }

  .l2 .label {
    margin-left: 4px;
  }

  .l1::before,
  .l2::before {
    content: '';
    position: absolute;
    left: 10px;
    top: 0;
    bottom: 0;
    width: 2px;
    background: #fff;
  }

  .l1.last::before {
    bottom: 50%;
  }

  .l2::before {
    left: 38px;
  }

  .l1::after,
  .l2::after {
    content: '';
    position: absolute;
    left: 11px;
    top: 50%;
    width: 17px;
    height: 2px;
    background: #fff;
  }

  .l2::after {
    left: 39px;
  }

  .pic .glyph {
    width: 30px;
    height: 30px;
    margin-right: 5px;
  }

  .node {
    position: absolute;
    left: 3px;
    z-index: 1;
    width: 17px;
    height: 17px;
    border-radius: 50%;
    background:
      linear-gradient(#000, #000) center / 11px 3px no-repeat,
      linear-gradient(#000, #000) center / 3px 11px no-repeat,
      radial-gradient(circle at 35% 30%, #d4d4d4, #8c8c8c 60%, #4c4c50);
  }

  .node.minus {
    background:
      linear-gradient(#000, #000) center / 11px 3px no-repeat,
      radial-gradient(circle at 35% 30%, #d4d4d4, #8c8c8c 60%, #4c4c50);
  }

  .l2 .node {
    left: 31px;
  }

  .dither {
    display: grid;
    place-items: center;
    width: 32px;
    height: 32px;
    background: repeating-conic-gradient(#c2c0c4 0 25%, transparent 0 50%) 0 0 / 2px 2px;
  }

  .dither .glyph {
    width: 20px;
    height: 20px;
  }

  .model {
    position: absolute;
    inset: 0;
    width: 100%;
    height: 100%;
    pointer-events: none;
    shape-rendering: crispEdges;
  }

  .compass {
    position: absolute;
    top: 67px;
    right: 17px;
    width: 220px;
    height: 170px;
  }

  .triad {
    position: absolute;
    right: 13px;
    bottom: 24px;
    width: 44px;
    height: 66px;
  }

  .palette {
    position: absolute;
    left: 99px;
    top: 138px;
    width: 249px;
    z-index: 2;
    color: #8f8f8f;
    background: #fff;
    box-shadow: 0 3px 10px rgb(0 0 0 / 45%);
  }

  .palette header {
    display: flex;
    align-items: center;
    justify-content: space-between;
    height: 38px;
    padding: 0 1px 0 9px;
  }

  .palette header button {
    width: 25px;
    height: 25px;
    background: #e6e6e6;
    color: #fff;
  }

  .palette .body {
    display: flex;
    height: 36px;
    background: linear-gradient(#fff, #d8d5e6 8px, var(--panel) 24px, #8f8ca2);
  }

  .palette .grip {
    margin: 0 6px 0 4px;
  }

  .palette .tool {
    padding-top: 5px;
  }

  .dialog {
    position: absolute;
    right: 235px;
    top: 225px;
    z-index: 2;
    width: 361px;
    color: #111;
    background: #fff;
    box-shadow: 0 2px 12px rgb(0 0 0 / 50%);
  }

  .dialog header {
    display: flex;
    align-items: center;
    height: 37px;
    padding: 0 2px 0 10px;
  }

  .dialog h2 {
    flex: 1;
  }

  .dialog header button {
    width: 57px;
    height: 30px;
  }

  .fields {
    display: flex;
    flex-direction: column;
    padding: 11px 10px 10px 11px;
    background: linear-gradient(#f0e2c2, #fae5c0 40%);
  }

  .field {
    display: flex;
    align-items: center;
    height: 28px;
  }

  .field.tall {
    height: 34px;
  }

  .field > label {
    width: 70px;
    white-space: nowrap;
  }

  .field > label.long {
    width: 120px;
  }

  .field input,
  .spin {
    height: 24px;
    background: #fff;
    border: 2px solid #fff;
    border-top-color: #777583;
    border-left-color: #777583;
  }

  .vector {
    flex: 1;
  }

  .field .picked {
    width: 173px;
    margin-left: 1px;
    padding-left: 3px;
    background: #0b78d0;
    color: #fff;
  }

  .multi {
    display: grid;
    place-items: center;
    width: 22px;
    height: 22px;
    margin-left: 1px;
    background: #e8e6ee;
    border: 1px solid #fff;
    border-right-color: #666;
    border-bottom-color: #666;
  }

  .multi .glyph {
    width: 18px;
    height: 18px;
  }

  .field .dir {
    width: 245px;
    padding-left: 3px;
  }

  .spin {
    display: flex;
    box-sizing: border-box;
    width: 264px;
    height: 26px;
  }

  .spin input {
    flex: 1;
    height: 20px;
    border: 0;
    padding-left: 4px;
  }

  .spin input::selection {
    background: #0b78d0;
    color: #fff;
  }

  .steps {
    display: grid;
    width: 22px;
  }

  .steps button {
    background: #e6e6e6;
    border: 1px solid #fff;
    border-right-color: #666;
    border-bottom-color: #666;
    font-size: 10px;
    line-height: 8px;
  }

  .push {
    display: flex;
    align-items: center;
    justify-content: center;
    height: 26px;
    background: var(--panel);
    border: 2px solid #f0eef8;
    border-right-color: #77738c;
    border-bottom-color: #77738c;
  }

  .push:disabled {
    color: #a19eb4;
    text-shadow: 1px 1px 0 #fff;
  }

  .push span {
    flex: 1;
    text-align: center;
  }

  .choices {
    display: flex;
    align-items: center;
    gap: 4px;
    height: 32px;
  }

  .choices label {
    display: flex;
    align-items: center;
    gap: 6px;
    margin-right: 4px;
  }

  .choices input {
    appearance: none;
    width: 11px;
    height: 11px;
    border: 1px solid #333;
    border-radius: 50%;
    background: #fdfad8;
  }

  .choices input:checked {
    background: radial-gradient(circle at 35% 35%, #8cb0e8, #183070 55%, #0a1438);
    box-shadow: 0 0 0 1px #fff;
  }

  .repeat {
    display: flex;
    align-items: center;
    gap: 4px;
    height: 22px;
  }

  .repeat input,
  .find input {
    appearance: none;
    width: 12px;
    height: 12px;
    border: 1px solid #222;
    background: #fdfbdc;
  }

  .actions {
    display: flex;
    justify-content: flex-end;
    gap: 8px;
    margin-top: 13px;
  }

  .actions .push {
    width: 85px;
  }

  .ball {
    width: 12px;
    height: 12px;
    margin-left: 4px;
    border-radius: 50%;
  }

  .green {
    background: radial-gradient(circle at 35% 30%, #b8f8a0, #20a020 45%, #084008);
  }

  .red {
    background: radial-gradient(circle at 35% 30%, #ffb8b0, #c82030 45%, #500810);
  }

  .planet {
    position: absolute;
    left: 0;
    bottom: 0;
    width: 60px;
    height: 40px;
  }

  .cursor {
    position: absolute;
    left: 1455px;
    top: 215px;
    z-index: 3;
    width: 10px;
    height: 24px;
  }

  .side {
    background: linear-gradient(90deg, #fff 0 3px, #dddaea 7px, var(--panel) 12px, var(--panel) 32px, #a7a4b8);
    overflow: hidden;
  }

  .vgroup {
    display: flex;
    flex-direction: column;
    padding-left: 4px;
  }

  .side .grip {
    width: 18px;
    height: 3px;
    margin: 1px 0 5px;
    border: 0;
    border-bottom: 1px solid #a3a0b4;
  }

  .side .tool {
    height: 33px;
    padding: 3px 5px;
  }

  .side .tool.drop {
    height: 35px;
  }

  .side .tool.off:not(.drop) {
    height: 31px;
  }

  .side .tool.drop::after {
    right: -2px;
  }

  .lower {
    padding-top: 4px;
    background: linear-gradient(#fff, #e6e4f0 7px, var(--panel) 14px, var(--panel) 34px, #9a97ae 48px, #50505a 49px);
  }

  .enovia {
    margin-left: 90px;
  }

  .ds {
    width: 56px;
    height: 40px;
    margin: 3px 9px 0 8px;
  }

  .enovia .ds {
    flex: none;
  }

  .catia {
    width: 45px;
    height: 32px;
    margin: 0 0 0 auto;
  }

  .brand {
    font: italic bold 12px 'Liberation Sans', sans-serif;
    fill: #35297c;
  }

  .find {
    display: flex;
    align-items: center;
    gap: 6px;
    width: 164px;
    height: 42px;
    color: #a19eb4;
    text-shadow: 1px 1px 0 #fff;
    white-space: nowrap;
  }

  .find input {
    border-color: #777;
    background: #e4dcd4;
  }

  .status {
    display: flex;
    align-items: center;
    padding-left: 4px;
    background: var(--panel);
  }

  .status output {
    flex: 1;
  }

  .status label {
    margin-right: 5px;
  }

  .status input {
    width: 300px;
    height: 25px;
    padding-left: 3px;
    background: #fff;
    border: 2px solid #fff;
    border-top-color: #777583;
    border-left-color: #777583;
  }

  .status button {
    display: grid;
    place-items: center;
    width: 34px;
    height: 25px;
    border: 1px solid #fff;
    border-right-color: #666;
    border-bottom-color: #666;
  }

  .status svg {
    width: 16px;
    height: 16px;
    fill: none;
  }

  .taskbar {
    display: flex;
    background: linear-gradient(90deg, #2d2129, #231e27 30%, #1f1d26 60%, #29222a);
    color: #fff;
  }

  .taskbar button {
    display: grid;
    place-items: center;
  }

  .sys {
    width: 45px;
  }

  .sys .glyph {
    width: 22px;
    height: 22px;
  }

  .apps {
    display: flex;
    margin-left: 3px;
  }

  .apps button {
    position: relative;
    width: 46px;
  }

  .apps .glyph {
    width: 20px;
    height: 20px;
  }

  .apps .current {
    background: #57525c;
  }

  .apps .current .glyph {
    outline: 1px solid #fff;
  }

  .apps .running::after {
    content: '';
    position: absolute;
    left: 6px;
    right: 6px;
    bottom: 0;
    height: 3px;
    background: #f08ca0;
  }

  .apps .current::after {
    left: 0;
    right: 0;
  }

  .tray {
    display: flex;
    align-items: center;
    margin-left: auto;
    padding-right: 5px;
    border-right: 1px solid #5a555c;
    margin-right: 5px;
  }

  .tray button {
    width: 30px;
    height: 38px;
  }

  .tray .glyph {
    width: 20px;
    height: 20px;
  }

  .tray .news {
    width: 44px;
  }

  .tray .news .glyph {
    width: 28px;
    height: 24px;
  }

  .lang {
    width: 50px;
    padding-left: 8px;
    box-sizing: content-box;
  }

  .tray time {
    width: 60px;
  }

  .tray .notice {
    width: 60px;
  }
</style>
